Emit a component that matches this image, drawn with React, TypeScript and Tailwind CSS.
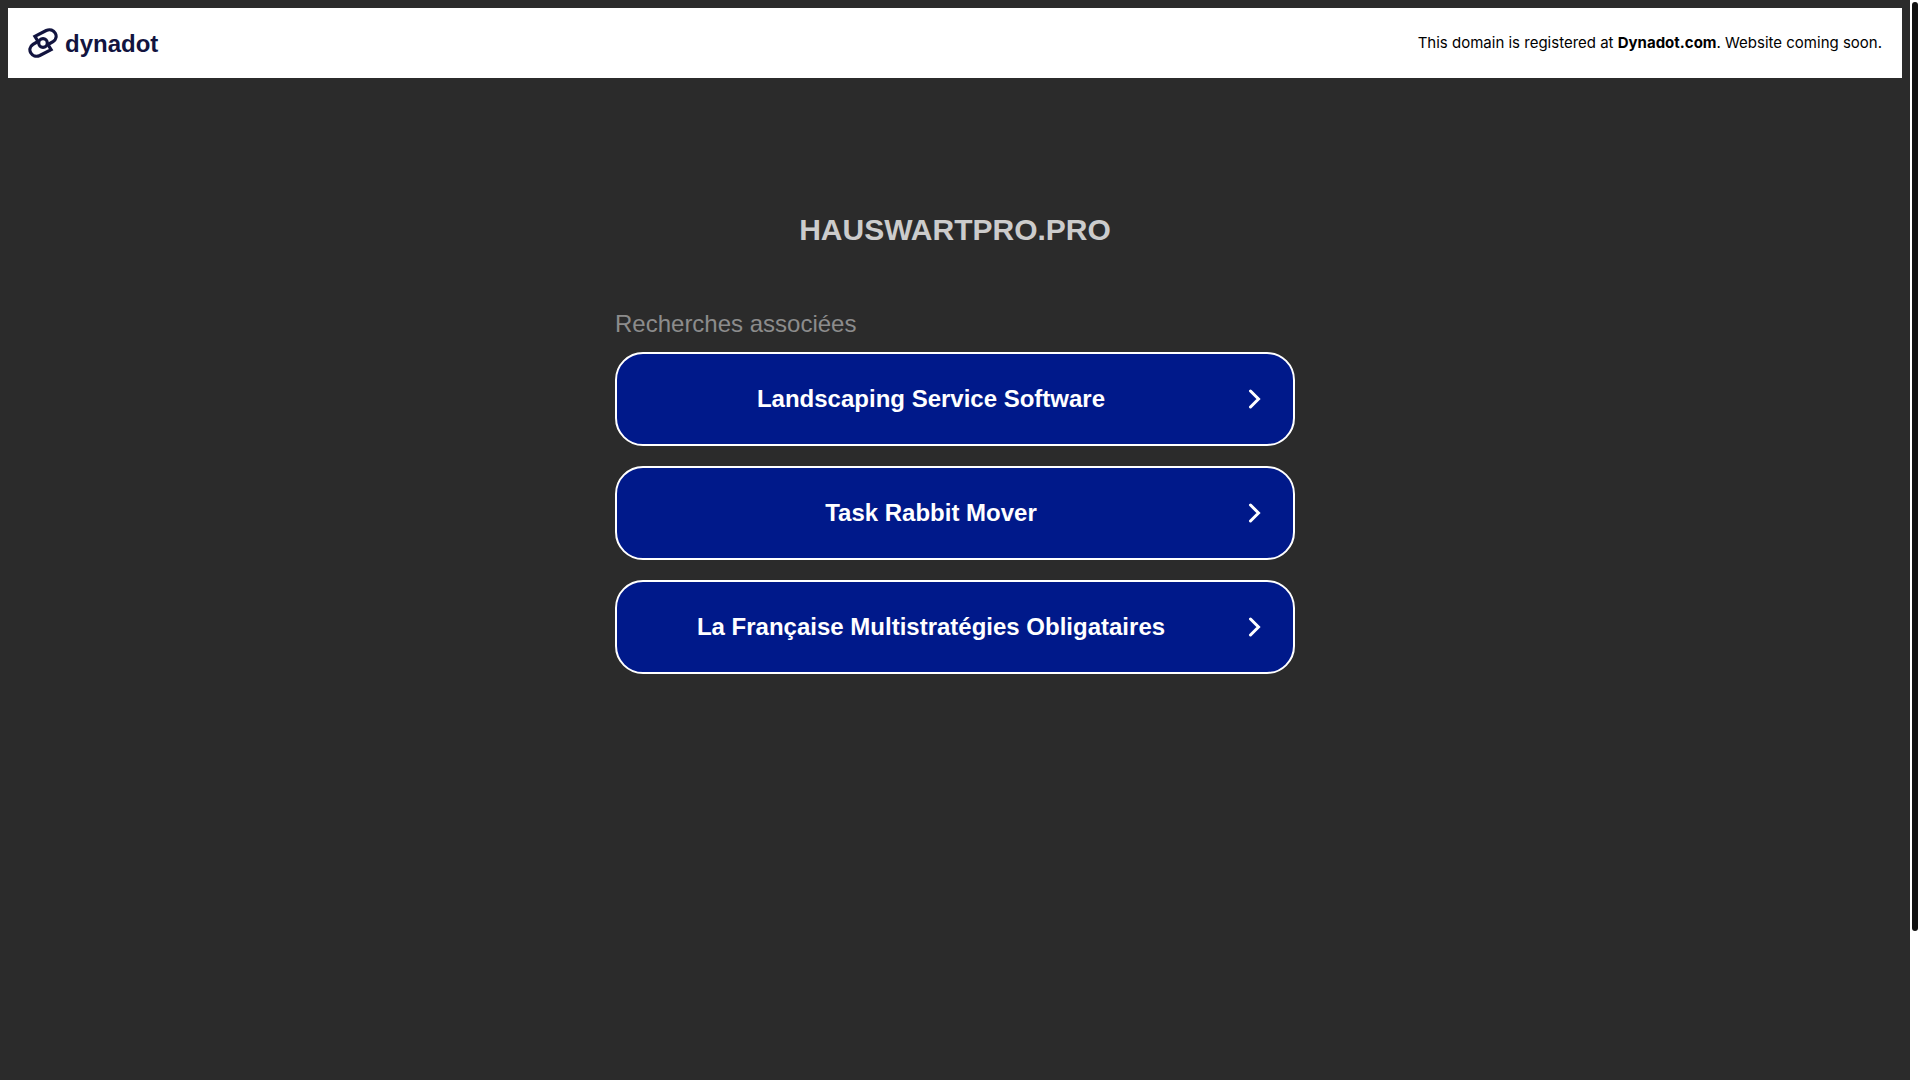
const searches = [
  "Landscaping Service Software",
  "Task Rabbit Mover",
  "La Française Multistratégies Obligataires",
];

function Logo() {
  return (
    <a href="#" className="flex items-center gap-[7px] text-[#12143f]">
      <svg
        className="h-[30px] w-[30px]"
        viewBox="0 0 30 30"
        fill="none"
        stroke="currentColor"
        strokeWidth="3.2"
        aria-hidden="true"
      >
        <path d="M10.4 14 6.9 8.300 18.200 2.500C26 -1 32 9 25 13.600L19.200 17" />
        <path d="M19.600 16 23.100 21.700 11.800 27.500C4 31 -2 21 5 16.400L10.800 13" />
        <circle cx="15" cy="15" r="4.300" />
      </svg>
      <span className="pt-0.5 font-['Liberation_Sans',Arial,sans-serif] text-2xl font-bold">
        dynadot
      </span>
    </a>
  );
}

function Chevron() {
  return (
    <svg
      className="h-5 w-4 shrink-0"
      viewBox="0 0 16 20"
      fill="none"
      stroke="currentColor"
      strokeWidth="3"
      strokeLinecap="round"
      aria-hidden="true"
    >
      <path d="M5.500 2 13.500 10 5.500 18" />
    </svg>
  );
}

export default function App() {
  return (
    <div className="flex min-h-screen bg-[#2b2b2b] font-['Liberation_Sans',Arial,sans-serif]">
      <div className="flex-1 p-2">
        <header className="flex h-[70px] items-center justify-between bg-white px-5">
          <Logo />
          <p className="font-[Inter,sans-serif] text-[15px] text-black">
            This domain is registered at{" "}
            <a href="#" className="font-bold">
              Dynadot.com
            </a>
            . Website coming soon.
          </p>
        </header>

        <main className="mx-auto max-w-[680px] pt-[134px]">
          <h1 className="text-center text-3xl font-bold text-[#cccccc]">HAUSWARTPRO.PRO</h1>

          {/* related searches */}
          <h2 className="mt-15 text-2xl text-[#8c8c8c]">Recherches associées</h2>
          <ul className="mt-3 flex flex-col gap-5">
            {searches.map((title) => (
              <li key={title}>
                <a
                  href="#"
                  className="flex h-[94px] items-center rounded-[28px] border-2 border-white bg-[#00198a] pr-8 text-2xl font-bold text-white"
                >
                  <span className="flex-1 text-center">{title}</span>
                  <Chevron />
                </a>
              </li>
            ))}
          </ul>
        </main>
      </div>

      {/* scroll track */}
      <div className="w-2.5 bg-white p-0.5">
        <div className="h-[86vh] rounded-full bg-[#111111]" />
      </div>
    </div>
  );
}
